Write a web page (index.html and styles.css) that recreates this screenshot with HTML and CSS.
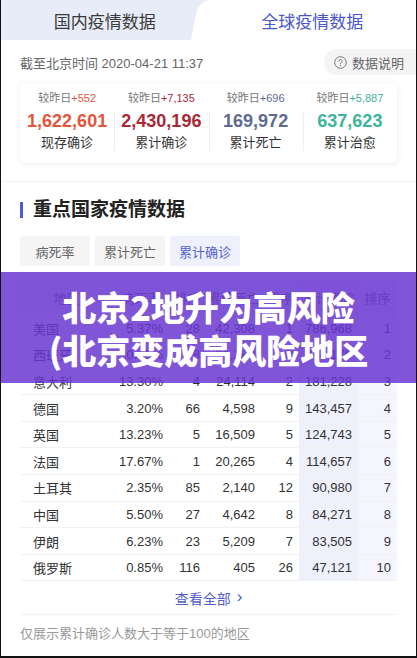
FILE: index.html
```html
<!DOCTYPE html>
<html lang="zh-CN">
<head>
<meta charset="utf-8">
<title>全球疫情数据</title>
<link rel="stylesheet" href="styles.css">
</head>
<body>
<div class="page">
  <nav class="tabs">
    <div class="tab">国内疫情数据</div>
    <div class="tab tab-active">全球疫情数据</div>
  </nav>

  <div class="meta">
    <span class="time">截至北京时间 2020-04-21 11:37</span>
    <span class="help">
      <svg class="help-icon" width="13" height="13" viewBox="0 0 13 13" aria-hidden="true">
        <circle cx="6.5" cy="6.5" r="5.8" fill="none" stroke="#777" stroke-width="1"/>
        <path d="M4.9 5.1a1.6 1.6 0 1 1 2.3 1.4c-.5.3-.7.6-.7 1.1v.3" fill="none" stroke="#777" stroke-width="1" stroke-linecap="round"/>
        <circle cx="6.5" cy="9.6" r=".6" fill="#777"/>
      </svg>
      数据说明
    </span>
  </div>

  <div class="card">
    <div class="stat">
      <div class="delta">较昨日<em class="c-now">+552</em></div>
      <div class="num c-now">1,622,601</div>
      <div class="label">现存确诊</div>
    </div>
    <div class="stat">
      <div class="delta">较昨日<em class="c-total">+7,135</em></div>
      <div class="num c-total">2,430,196</div>
      <div class="label">累计确诊</div>
    </div>
    <div class="stat">
      <div class="delta">较昨日<em class="c-dead">+696</em></div>
      <div class="num c-dead">169,972</div>
      <div class="label">累计死亡</div>
    </div>
    <div class="stat">
      <div class="delta">较昨日<em class="c-cured">+5,887</em></div>
      <div class="num c-cured">637,623</div>
      <div class="label">累计治愈</div>
    </div>
  </div>

  <section class="key">
    <h2 class="title">重点国家疫情数据</h2>
    <div class="filters">
      <button class="filter">病死率</button>
      <button class="filter">累计死亡</button>
      <button class="filter filter-active">累计确诊</button>
    </div>

    <table class="rank">
      <thead>
        <tr>
          <th class="col-name">地区</th>
          <th class="g1">病死率</th>
          <th class="g1">排序</th>
          <th class="g2">累计死亡</th>
          <th class="g2">排序</th>
          <th class="g3 hl">累计确诊</th>
          <th class="g3 hl2">排序</th>
        </tr>
      </thead>
      <tbody>
        <tr><td class="col-name">美国</td><td>5.37%</td><td>28</td><td>42,308</td><td>1</td><td class="hl">786,968</td><td class="hl2">1</td></tr>
        <tr><td class="col-name">西班牙</td><td>10.45%</td><td>8</td><td>21,282</td><td>3</td><td class="hl">204,178</td><td class="hl2">2</td></tr>
        <tr><td class="col-name">意大利</td><td>13.30%</td><td>4</td><td>24,114</td><td>2</td><td class="hl">181,228</td><td class="hl2">3</td></tr>
        <tr><td class="col-name">德国</td><td>3.20%</td><td>66</td><td>4,598</td><td>9</td><td class="hl">143,457</td><td class="hl2">4</td></tr>
        <tr><td class="col-name">英国</td><td>13.23%</td><td>5</td><td>16,509</td><td>5</td><td class="hl">124,743</td><td class="hl2">5</td></tr>
        <tr><td class="col-name">法国</td><td>17.67%</td><td>1</td><td>20,265</td><td>4</td><td class="hl">114,657</td><td class="hl2">6</td></tr>
        <tr><td class="col-name">土耳其</td><td>2.35%</td><td>85</td><td>2,140</td><td>12</td><td class="hl">90,980</td><td class="hl2">7</td></tr>
        <tr><td class="col-name">中国</td><td>5.50%</td><td>27</td><td>4,642</td><td>8</td><td class="hl">84,271</td><td class="hl2">8</td></tr>
        <tr><td class="col-name">伊朗</td><td>6.23%</td><td>23</td><td>5,209</td><td>7</td><td class="hl">83,505</td><td class="hl2">9</td></tr>
        <tr><td class="col-name">俄罗斯</td><td>0.85%</td><td>116</td><td>405</td><td>26</td><td class="hl">47,121</td><td class="hl2">10</td></tr>
      </tbody>
    </table>

    <a class="more" href="#">查看全部<span class="chev">›</span></a>
    <p class="note">仅展示累计确诊人数大于等于100的地区</p>
  </section>

  <div class="banner">
    <span>北京2地升为高风险</span>
    <span>(北京变成高风险地区</span>
  </div>
</div>
</body>
</html>
```

FILE: styles.css
```css
* { box-sizing: border-box; }

html, body {
  margin: 0;
  padding: 0;
  background: #000;
}

body {
  font-family: "Liberation Sans", "Noto Sans CJK SC", sans-serif;
  color: #333;
}

.page {
  position: relative;
  width: 417px;
  height: 658px;
  overflow: hidden;
  background: #fff;
  border-left: 1px solid #111;
  border-right: 1px solid #111;
  border-bottom: 2px solid #111;
}

/* top tabs */
.tabs {
  display: flex;
  height: 40px;
  background: #e8ebf8;
}
.tab {
  flex: 1;
  display: flex;
  align-items: center;
  justify-content: center;
  font-size: 17px;
  color: #3a3a3a;
  position: relative;
}
.tab-active {
  background: #fff;
  color: #4a57cc;
}
/* slanted, rounded left edge of the active tab */
.tab-active::before {
  content: "";
  position: absolute;
  left: -18px;
  top: 0;
  bottom: 0;
  width: 30px;
  background: #fff;
  border-top-left-radius: 12px;
  transform: skewX(-11deg);
  transform-origin: bottom left;
}

/* update time row */
.meta {
  display: flex;
  align-items: center;
  justify-content: space-between;
  height: 26px;
  margin-top: 9px;
  padding-left: 19px;
}
.time {
  font-size: 13px;
  color: #666;
}
.help {
  display: flex;
  align-items: center;
  gap: 5px;
  height: 26px;
  padding: 0 12px 0 10px;
  background: #f4f4f5;
  border-radius: 13px 0 0 13px;
  font-size: 13px;
  color: #666;
}

/* summary card */
.card {
  display: flex;
  margin: 8px 19px 0;
  height: 80px;
  padding-top: 8px;
  background: #fff;
  border-radius: 6px;
  box-shadow: 0 1px 7px rgba(0, 0, 0, 0.08);
}
.stat {
  flex: 1;
  position: relative;
  text-align: center;
}
.stat + .stat::before {
  content: "";
  position: absolute;
  left: 0;
  top: 20px;
  height: 40px;
  width: 1px;
  background: #eee;
}
.delta {
  font-size: 11px;
  line-height: 15px;
  color: #777;
}
.delta em { font-style: normal; }
.num {
  margin-top: 3px;
  font-size: 18px;
  line-height: 24px;
  font-weight: 700;
}
.label {
  margin-top: 1px;
  font-size: 13px;
  line-height: 18px;
  color: #333;
}
.c-now { color: #e5553b; }
.c-total { color: #a92a36; }
.c-dead { color: #5d6a91; }
.c-cured { color: #3eb49c; }

/* key countries section */
.key {
  margin-top: 18px;
  border-top: 1px solid #f2f2f2;
  padding: 0 19px;
}
.title {
  margin: 17px 0 0;
  display: flex;
  align-items: center;
  gap: 10px;
  font-size: 19px;
  line-height: 22px;
  font-weight: 700;
  color: #222;
}
.title::before {
  content: "";
  width: 3px;
  height: 16px;
  background: #4f5bd5;
}

.filters {
  display: flex;
  gap: 5px;
  margin-top: 15px;
}
.filter {
  width: 70px;
  height: 30px;
  border: 0;
  border-radius: 2px;
  background: #f5f5f5;
  font-family: inherit;
  font-size: 13px;
  color: #666;
  padding: 0;
}
.filter-active {
  background: #eef0fc;
  color: #5462d2;
}

/* ranking table */
.rank {
  width: 100%;
  margin-top: 14px;
  border-collapse: collapse;
  table-layout: fixed;
  font-size: 13px;
}
.rank th {
  height: 35px;
  font-weight: 400;
  color: #666;
  background: #f5f6f8;
  text-align: center;
}
.rank th.g1 { background: #f2f3f6; }
.rank th.g2 { background: #eceefa; }
.rank th.hl { background: #f6e6f2; }
.rank th.hl2 { background: #f1eef9; }
.rank td {
  height: 26.6px;
  padding: 0 6px 0 0;
  text-align: right;
  color: #333;
  border-bottom: 1px solid #f2f2f2;
  white-space: nowrap;
}
.rank td.col-name {
  text-align: left;
  padding-left: 13px;
}
.rank td.hl { background: #eef0fc; }
.rank td.hl2 { background: #f4f5fd; }

.rank th:nth-child(1) { width: 93px; }
.rank th:nth-child(2) { width: 56px; }
.rank th:nth-child(3) { width: 37px; }
.rank th:nth-child(4) { width: 55px; }
.rank th:nth-child(5) { width: 38px; }
.rank th:nth-child(6) { width: 59px; }
.rank th:nth-child(7) { width: 39px; }

.more {
  display: flex;
  align-items: center;
  justify-content: center;
  gap: 6px;
  height: 34px;
  font-size: 14px;
  color: #5060c8;
  text-decoration: none;
  border-bottom: 1px solid #f2f2f2;
}
.chev {
  font-size: 17px;
  line-height: 1;
  margin-top: -2px;
}
.note {
  margin: 10px 0 0;
  font-size: 13px;
  line-height: 18px;
  color: #999;
}

/* headline ribbon over the table */
.banner {
  position: absolute;
  left: 0;
  right: 0;
  top: 272px;
  height: 111px;
  display: flex;
  flex-direction: column;
  align-items: center;
  justify-content: center;
  background: rgba(104, 52, 208, 0.84);
  color: #fff;
  font-family: "Noto Sans CJK SC", sans-serif;
  font-weight: 900;
  font-size: 34px;
  line-height: 43px;
  white-space: nowrap;
}
```
